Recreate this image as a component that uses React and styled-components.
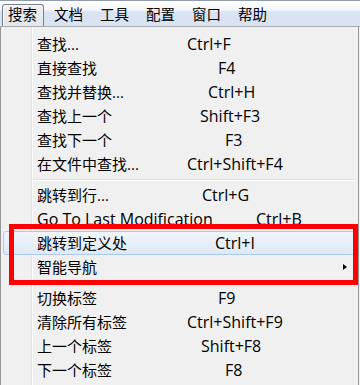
import React from "react";
import styled, { createGlobalStyle } from "styled-components";

const GlobalStyle = createGlobalStyle`
  html, body { margin: 0; padding: 0; background: #f0f0f0; }
  body { font-family: "Open Sans", "Noto Sans CJK SC", sans-serif; color: #000; }
`;

const Page = styled.div`
  position: relative;
  width: 360px;
  height: 385px;
  overflow: hidden;
  background: #f0f0f0;
`;

const MenuBar = styled.div`
  box-sizing: border-box;
  height: 27px;
  display: flex;
  align-items: flex-end;
  padding-left: 2px;
  border-top: 1px solid #8e9bb0;
  border-bottom: 1px solid #a7abb2;
  background: linear-gradient(#ffffff 0%, #f3f6fb 35%, #dae3f2 45%, #dae3f2 100%);
`;

const BarItem = styled.div`
  box-sizing: border-box;
  height: 22px;
  padding: 0 6px 1px 5px;
  margin-right: 4px;
  display: flex;
  align-items: center;
  font-size: 14.5px;
  line-height: 1;
  border: 1px solid ${(p) => (p.$active ? "#7a7f87" : "transparent")};
  border-bottom: none;
  border-radius: 3px 3px 0 0;
  background: ${(p) => (p.$active ? "linear-gradient(#eef0f3, #e3e6eb)" : "transparent")};
  box-shadow: ${(p) => (p.$active ? "inset 1px 1px 0 #fbfbfc" : "none")};
`;

const Dropdown = styled.div`
  box-sizing: border-box;
  width: 359px;
  height: 358px;
  padding: 5px 3px 0 2px;
  border-left: 1px solid #979797;
  border-right: 1px solid #979797;
  background:
    linear-gradient(to right, transparent 30px, #e2e3e3 30px, #e2e3e3 31px, #ffffff 31px, #ffffff 32px, transparent 32px),
    #f0f0f0;
`;

const Row = styled.div`
  box-sizing: border-box;
  height: 24px;
  display: flex;
  align-items: center;
  padding-left: 33px;
  font-size: 15px;
  line-height: 1;
  white-space: nowrap;
  border: 1px solid ${(p) => (p.$hover ? "#aecbef" : "transparent")};
  border-radius: 3px;
  background: ${(p) => (p.$hover ? "linear-gradient(#f1f5fb, #dfe9f6)" : "transparent")};
`;

const Label = styled.span`
  flex: none;
  width: 150px;
  font-size: ${(p) => (p.$latin ? "16px" : "15px")};
`;

const Shortcut = styled.span`
  flex: none;
  font-size: 16px;
  padding-left: ${(p) => p.$offset}px;
`;

const Arrow = styled.span`
  margin-left: auto;
  margin-right: 7px;
  width: 0;
  height: 0;
  border-top: 3.5px solid transparent;
  border-bottom: 3.5px solid transparent;
  border-left: 4px solid #000;
`;

const Separator = styled.div`
  height: 0;
  margin: 3px 0 2px 30px;
  border-top: 1px solid #e0e0e0;
  border-bottom: 1px solid #ffffff;
`;

const Callout = styled.div`
  position: absolute;
  left: 9px;
  top: 224px;
  width: 349px;
  height: 61px;
  box-sizing: border-box;
  border: 5px solid #ff0000;
  pointer-events: none;
`;

const barItems = ["搜索", "文档", "工具", "配置", "窗口", "帮助"];

const groups = [
  [
    ["查找...", "Ctrl+F", 187],
    ["直接查找", "F4", 218],
    ["查找并替换...", "Ctrl+H", 208],
    ["查找上一个", "Shift+F3", 200],
    ["查找下一个", "F3", 225],
    ["在文件中查找...", "Ctrl+Shift+F4", 187],
  ],
  [
    ["跳转到行...", "Ctrl+G", 202],
    ["Go To Last Modification", "Ctrl+B", 256, false, false, true],
    ["跳转到定义处", "Ctrl+I", 215, true],
    ["智能导航", null, 0, false, true],
  ],
  [
    ["切换标签", "F9", 218],
    ["清除所有标签", "Ctrl+Shift+F9", 187],
    ["上一个标签", "Shift+F8", 201],
    ["下一个标签", "F8", 225],
  ],
];

export default function App() {
  return (
    <Page>
      <GlobalStyle />
      <MenuBar>
        {barItems.map((t, i) => (
          <BarItem key={t} $active={i === 0}>{t}</BarItem>
        ))}
      </MenuBar>
      <Dropdown>
        {groups.map((g, gi) => (
          <React.Fragment key={gi}>
            {gi > 0 && <Separator />}
            {g.map(([label, sc, x, hover, sub, latin]) => (
              <Row key={label} $hover={hover}>
                <Label $latin={latin}>{label}</Label>
                {sc && <Shortcut $offset={x - 187}>{sc}</Shortcut>}
                {sub && <Arrow />}
              </Row>
            ))}
          </React.Fragment>
        ))}
      </Dropdown>
      <Callout />
    </Page>
  );
}
